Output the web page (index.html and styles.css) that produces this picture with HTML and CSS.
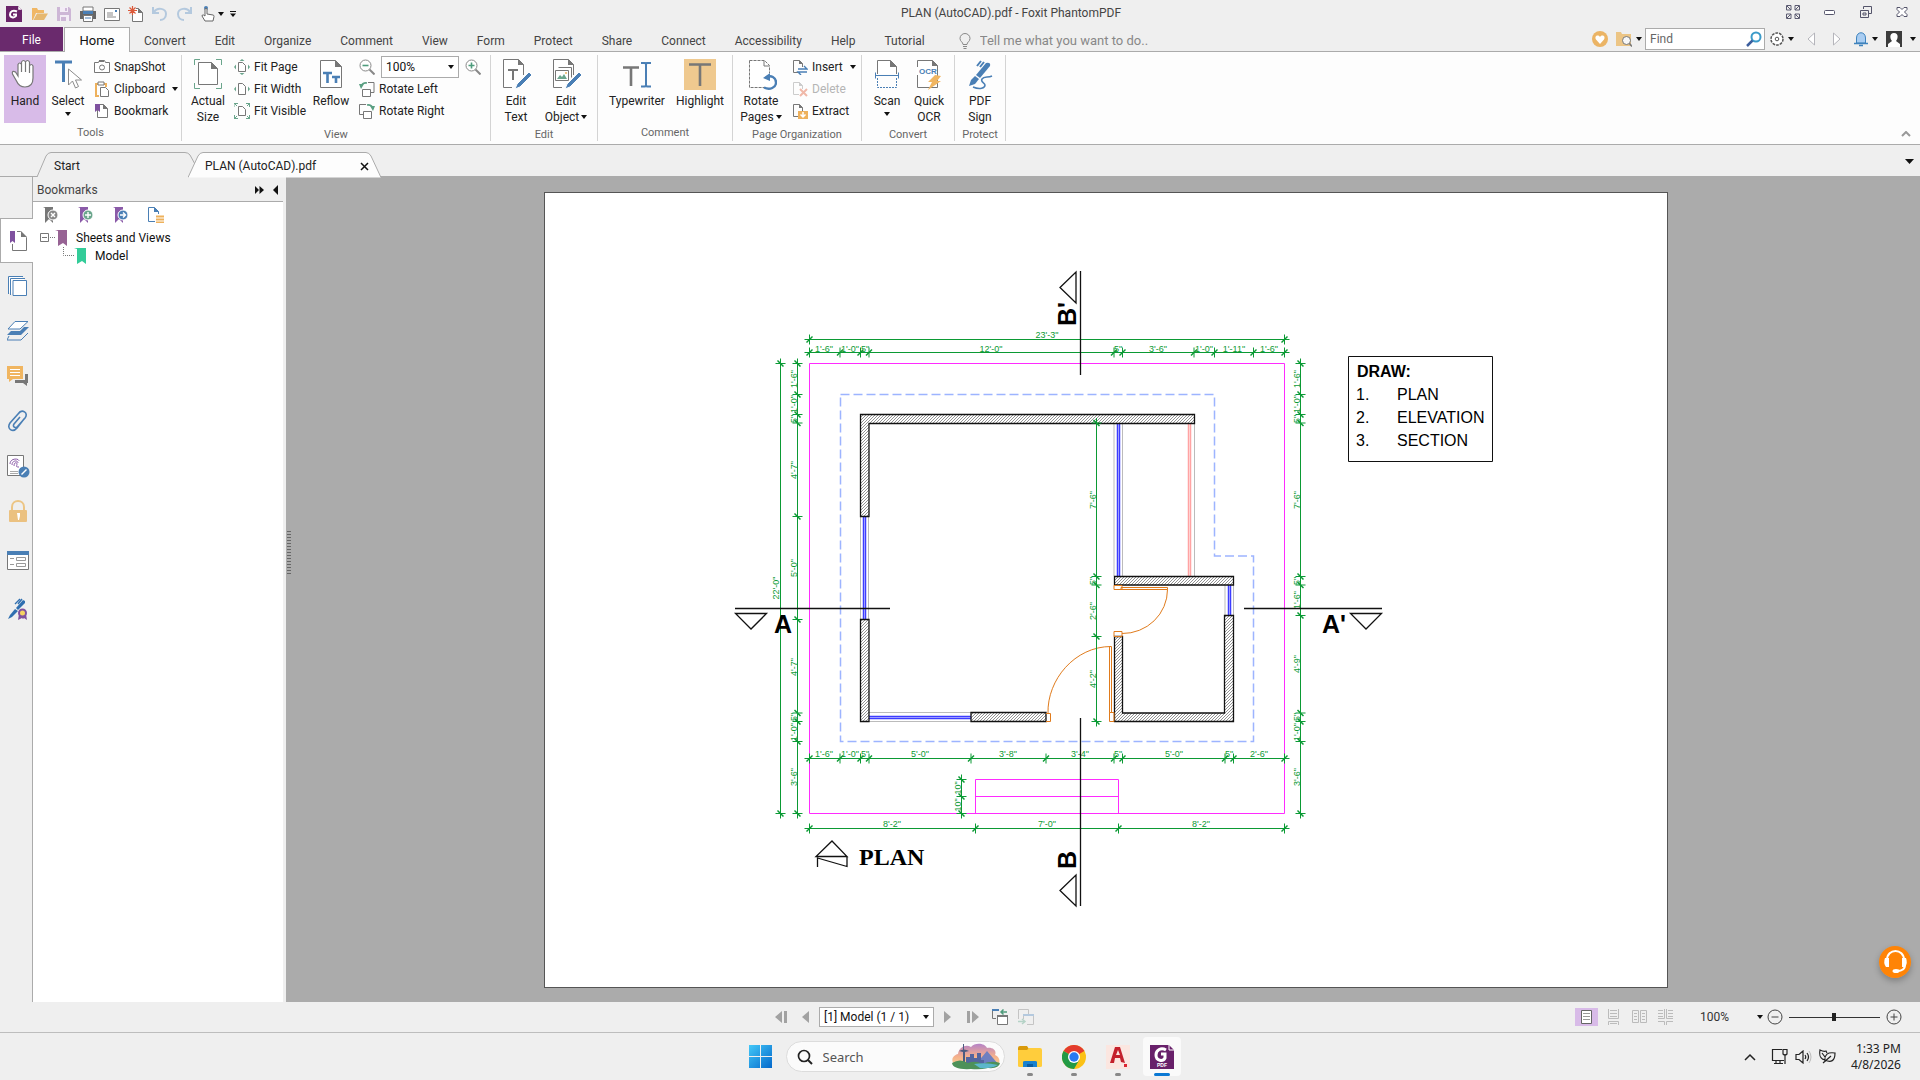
FILE: index.html
```html
<!DOCTYPE html>
<html lang="en">
<head>
<meta charset="utf-8">
<title>PLAN (AutoCAD).pdf - Foxit PhantomPDF</title>
<link rel="stylesheet" href="styles.css">
</head>
<body>
<svg class="defs" width="0" height="0" aria-hidden="true">
  <defs>
    <symbol id="caret" viewBox="0 0 6 4"><path d="M0 0h6L3 4z" fill="#111"/></symbol>
    <symbol id="page" viewBox="0 0 16 16"><path d="M3.500 1.500h6l4 4v9h-10z" fill="#fff" stroke="#777"/><path d="M9 1l5 5H9z" fill="#777"/></symbol>
  </defs>
</svg>

<header class="titlebar">
  <div class="quick">
    <svg class="logo" width="16" height="16" viewBox="0 0 16 16"><path d="M0 0h12l4 4v12H0z" fill="#6a2469"/><path d="M12 0v4h4" fill="#fff" stroke="#6a2469" stroke-width=".5"/><path d="M11 5.500c-4-2-7 0-7 3s4 4 6 1.500V8.500H7" fill="none" stroke="#fff" stroke-width="2"/></svg>
    <button title="Open"><svg width="16" height="16" viewBox="0 0 16 16"><path d="M0 2h5l1 2h6v3H4l-3 7H0z" fill="#f0b765"/><path d="M5 7.500h11l-4 6.500H1.500z" fill="#e6b870"/></svg></button>
    <button title="Save"><svg width="16" height="16" viewBox="0 0 16 16"><path d="M1 1h12l2 2v12H1z" fill="#cdb7d6"/><path d="M4 1h8v5H4zM4 9h9v6H4z" fill="#f3edf6"/><path d="M9 2h2v3H9zM5 11h5v4H5z" fill="#cdb7d6"/></svg></button>
    <button title="Print"><svg width="16" height="16" viewBox="0 0 16 16"><path d="M3 1h10v4H3z" fill="#fff" stroke="#777"/><path d="M0 5h16v8H0z" fill="#666"/><path d="M3 5h10v3H3z" fill="#4a7fb5"/><path d="M3.500 9.500h9v6h-9z" fill="#fff" stroke="#777"/><path d="M5 12h6" stroke="#4a7fb5"/></svg></button>
    <button title="Email"><svg width="16" height="16" viewBox="0 0 16 16"><path d="M.5 2.500h15v12H.5z" fill="#fff" stroke="#777"/><path d="M3 7h6M3 9h6M3 11h9" stroke="#888"/><path d="M11 4h2v2h-2z" fill="#4a7fb5"/></svg></button>
    <button title="New"><svg width="16" height="16" viewBox="0 0 16 16"><path d="M4.500 7v8.500h10v-9l-4-4H8" fill="#fff" stroke="#777"/><path d="M10 2l5 5h-5z" fill="#777"/><path d="M4.500 0v9M0 4.500h9M1.500 1.500l6 6M7.500 1.500l-6 6" stroke="#dc5a3a" stroke-width="1.200"/></svg></button>
    <button title="Undo"><svg width="16" height="16" viewBox="0 0 16 16"><path d="M1 1v6h6M2 6c3-5 12-4 12 2 0 4-3 6-6 6" fill="none" stroke="#b4c9de" stroke-width="2"/></svg></button>
    <button title="Redo"><svg width="16" height="16" viewBox="0 0 16 16"><path d="M15 1v6H9M14 6C11 1 2 2 2 8c0 4 3 6 6 6" fill="none" stroke="#b4c9de" stroke-width="2"/></svg></button>
    <button title="Touch mode"><svg width="16" height="16" viewBox="0 0 16 16"><circle cx="6" cy="2" r="2" fill="#4a7fb5"/><path d="M5 10V3q1-1.500 2 0v5l6 1q1 0 1 1.500L13 15H5L2 10q0-1.500 1.500-1z" fill="#fff" stroke="#666"/></svg></button>
    <svg class="handarrow" width="6" height="4"><use href="#caret"/></svg>
    <button title="Customize"><svg width="6" height="6" viewBox="0 0 6 6"><path d="M0 .5h6" stroke="#111"/><path d="M0 2.500h6L3 6z" fill="#111"/></svg></button>
  </div>
  <div class="title">PLAN (AutoCAD).pdf - Foxit PhantomPDF</div>
  <div class="winctl">
    <button title="Full screen"><svg width="14" height="14" viewBox="0 0 14 14"><path d="M.5 5V.5H5V5zM9 .5h4.500V5H9zM.5 9H5v4.500H.5zM9 9h4.500v4.500H9zM1 1l4 4M13 1L9 5M1 13l4-4M13 13L9 9" fill="none" stroke="#5a5a70"/></svg></button>
    <button title="Minimize"><svg width="12" height="14" viewBox="0 0 12 14"><rect x=".5" y="5.500" width="10" height="4" rx="1" fill="#fff" stroke="#55556b"/></svg></button>
    <button title="Restore"><svg width="12" height="12" viewBox="0 0 12 12"><path d="M3.500 3V.5h8v7H9M.5 4.500h8v7h-8zM3 7h3v2H3z" fill="none" stroke="#55556b"/></svg></button>
    <button title="Close"><svg width="12" height="12" viewBox="0 0 12 12"><path d="M1 1.500h3l2 2 2-2h3v2L8.500 6l2.500 2.500v2H8l-2-2-2 2H1v-2L3.500 6 1 3.500z" fill="#fff" stroke="#55556b"/></svg></button>
  </div>
</header>

<nav class="menubar">
  <button class="file">File</button>
  <button class="home">Home</button>
  <div class="menus">
    <button>Convert</button><button>Edit</button><button>Organize</button><button>Comment</button><button>View</button><button>Form</button><button>Protect</button><button>Share</button><button>Connect</button><button>Accessibility</button><button>Help</button><button>Tutorial</button>
  </div>
  <label class="tell"><svg width="12" height="16" viewBox="0 0 12 16"><path d="M4 11.500C4 9 1 8.500 1 5.500a5 5 0 0 1 10 0c0 3-3 3.500-3 6zM4 13.500h4M4.500 15.500h3" fill="none" stroke="#888"/></svg><input type="text" placeholder="Tell me what you want to do.." aria-label="Tell me what you want to do"></label>
  <div class="tools">
    <button title="Favorite"><svg width="16" height="16" viewBox="0 0 16 16"><circle cx="8" cy="8" r="8" fill="#ebb465"/><path d="M8 13L4 8.500C2 5 6 3 8 6c2-3 6-1 4 2.500z" fill="#fff"/></svg></button>
    <button class="drop" title="Search folder"><svg width="16" height="16" viewBox="0 0 16 16"><path d="M0 1h5l1 2h9v12H0z" fill="#ecc585"/><circle cx="10.500" cy="9.500" r="4" fill="#f7f7f7" stroke="#777"/><path d="M13.500 12.500L16 15.500" stroke="#777" stroke-width="1.500"/></svg><svg width="6" height="4"><use href="#caret"/></svg></button>
    <div class="find"><input type="text" placeholder="Find" aria-label="Find"><svg width="16" height="16" viewBox="0 0 16 16"><circle cx="10" cy="6" r="4.500" fill="#fff" stroke="#3b9bc9" stroke-width="2"/><path d="M6.500 9.500L1 15" stroke="#3d5f9e" stroke-width="2.500"/></svg></div>
    <button class="drop" title="Settings"><svg width="14" height="14" viewBox="0 0 14 14"><circle cx="7" cy="7" r="6" fill="#fff" stroke="#555" stroke-width="1.500" stroke-dasharray="2.700 1"/><circle cx="7" cy="7" r="1.800" fill="none" stroke="#555"/></svg><svg width="6" height="4"><use href="#caret"/></svg></button>
    <button class="step" title="Previous"><svg width="8" height="14" viewBox="0 0 8 14"><path d="M7.500 1v12L1 7z" fill="#fff" stroke="#b5b5bb"/></svg></button>
    <button class="step" title="Next"><svg width="8" height="14" viewBox="0 0 8 14"><path d="M.5 1v12L7 7z" fill="#fff" stroke="#b5b5bb"/></svg></button>
    <button class="drop" title="Notifications"><svg width="14" height="16" viewBox="0 0 14 16"><path d="M2.500 12V7c0-7 9-7 9 0v5z" fill="#a9cdf2" stroke="#3f83bd"/><path d="M0 12.500h14M5 14.500h4" stroke="#3f83bd" stroke-width="1.500"/></svg><svg width="6" height="4"><use href="#caret"/></svg></button>
    <button class="drop user" title="Account"><svg width="16" height="16" viewBox="0 0 16 16"><path d="M0 0h16v16H0z" fill="#3c3c3c"/><path d="M8 2c5 0 4 6 2 8l4 3v3H2v-3l4-3C4 8 3 2 8 2z" fill="#fff"/></svg><svg width="6" height="4"><use href="#caret"/></svg></button>
  </div>
</nav>

<section class="ribbon">
  <div class="group g-tools">
    <div class="cells">
      <button class="big on"><svg width="32" height="32" viewBox="0 0 32 32"><path d="M9 18V6.500q1.500-3 3.500 0V14 4q2-3 4 0v10V4q2-3 4 0v11V8q2-3 3.500 0v12q0 9-8 9-6 0-8.500-6l-4-7q-1-4 3-2z" fill="#fff" stroke="#777" stroke-width="1.200"/></svg>Hand</button>
      <button class="big"><svg width="32" height="32" viewBox="0 0 32 32"><path d="M3 4h17M11.500 4v20" stroke="#4a7fb5" stroke-width="3" fill="none"/><path d="M16.500 11v16l4-4 3 7 3-1.500-3-6.500h6z" fill="#fff" stroke="#8b8b8b"/></svg>Select<svg class="under" width="6" height="4"><use href="#caret"/></svg></button>
      <div class="col">
        <button class="small"><svg width="16" height="16" viewBox="0 0 16 16"><path d="M.5 3.500h4l1-2h5l1 2h4v10H.5z" fill="#fff" stroke="#777"/><circle cx="8" cy="8.500" r="2.500" fill="none" stroke="#777"/><path d="M5 1h5v2H5z" fill="#777"/></svg>SnapShot</button>
        <button class="small"><svg width="16" height="16" viewBox="0 0 16 16"><path d="M5 15H2V3h10v3" fill="none" stroke="#eeb15c" stroke-width="2"/><path d="M4 1h6v3H4z" fill="#fff" stroke="#777"/><path d="M6.500 6.500h5l3 3v6h-8z" fill="#fff" stroke="#777"/></svg>Clipboard<svg class="arr" width="6" height="4"><use href="#caret"/></svg></button>
        <button class="small"><svg width="16" height="16" viewBox="0 0 16 16"><use href="#page"/><path d="M1 1h5v8L3.500 7 1 9z" fill="#7f519f"/></svg>Bookmark</button>
      </div>
    </div>
    <div class="name">Tools</div>
  </div>

  <div class="group g-view">
    <div class="cells">
      <button class="big"><svg width="32" height="32" viewBox="0 0 32 32"><path d="M2.500 7V1.500H8M24 1.500h5.500V7M2.500 25v5.500H8M24 30.500h5.500V25" fill="none" stroke="#6aa58c"/><path d="M6.500 4.500h13l6 6v16h-19z" fill="#fff" stroke="#777"/><path d="M19 4l7 7h-7z" fill="#777"/></svg>Actual<br>Size</button>
      <div class="col">
        <button class="small"><svg width="16" height="16" viewBox="0 0 16 16"><path d="M4.500 3.500h4l3 3v6h-7z" fill="#fff" stroke="#777"/><path d="M8 0l2.500 2h-5zM8 16l2.500-2h-5zM0 8l2-2.500v5zM16 8l-2-2.500v5z" fill="#6aa58c"/></svg>Fit Page</button>
        <button class="small"><svg width="16" height="16" viewBox="0 0 16 16"><path d="M4.500 2.500h4l3 3v8h-7z" fill="#fff" stroke="#777"/><path d="M0 8l2-2.500v5zM16 8l-2-2.500v5z" fill="#6aa58c"/></svg>Fit Width</button>
        <button class="small"><svg width="16" height="16" viewBox="0 0 16 16"><path d="M4.500 3.500h4l3 3v6h-7z" fill="#fff" stroke="#777"/><path d="M0 4V.5h4M12 .5h3.500V4M.5 12v3.500H4M12 15.500h3.500V12M0 0l3 3M16 0l-3 3M0 16l3-3M16 16l-3-3" fill="none" stroke="#6aa58c"/></svg>Fit Visible</button>
      </div>
      <button class="big"><svg width="32" height="32" viewBox="0 0 32 32"><path d="M5.500 2.500h15l6 6v21h-21z" fill="#fff" stroke="#777"/><path d="M20 2l7 7h-7z" fill="#777"/><path d="M8 15h9M12.500 14v11M17 19h8M21 18v7" stroke="#4a7fb5" stroke-width="2.600"/></svg>Reflow</button>
      <div class="col zoomcol">
        <div class="zoomrow">
          <button title="Zoom out"><svg width="16" height="16" viewBox="0 0 16 16"><circle cx="6.500" cy="6.500" r="5.500" fill="#fff" stroke="#888"/><path d="M3.500 6.500h6" stroke="#4f9c7c" stroke-width="1.600"/><path d="M10.500 10.500l5 5" stroke="#888" stroke-width="2"/></svg></button>
          <div class="combo"><select aria-label="Zoom level"><option>100%</option></select><svg width="6" height="4"><use href="#caret"/></svg></div>
          <button title="Zoom in"><svg width="16" height="16" viewBox="0 0 16 16"><circle cx="6.500" cy="6.500" r="5.500" fill="#fff" stroke="#888"/><path d="M3.500 6.500h6M6.500 3.500v6" stroke="#4f9c7c" stroke-width="1.600"/><path d="M10.500 10.500l5 5" stroke="#888" stroke-width="2"/></svg></button>
        </div>
        <button class="small"><svg width="16" height="16" viewBox="0 0 16 16"><path d="M9 1.500h6v10h-3" fill="none" stroke="#777"/><path d="M3.500 8.500h8v7h-8z" fill="#fff" stroke="#777"/><path d="M2 6c0-3 3-4.500 6-4" fill="none" stroke="#5a9f82" stroke-width="1.600"/><path d="M0 3h5L2 8z" fill="#5a9f82"/></svg>Rotate Left</button>
        <button class="small"><svg width="16" height="16" viewBox="0 0 16 16"><path d="M7 1.500H.5v10H4" fill="none" stroke="#777"/><path d="M4.500 8.500h8v7h-8z" fill="#fff" stroke="#777"/><path d="M14 6c0-3-3-4.500-6-4" fill="none" stroke="#5a9f82" stroke-width="1.600"/><path d="M16 3h-5l3 5z" fill="#5a9f82"/></svg>Rotate Right</button>
      </div>
    </div>
    <div class="name">View</div>
  </div>

  <div class="group g-edit">
    <div class="cells">
      <button class="big"><svg width="32" height="32" viewBox="0 0 32 32"><path d="M12 29.500H3.500v-28h15l5 5V17" fill="#fff" stroke="#777"/><path d="M18 1l6 6h-6z" fill="#777"/><path d="M8 12h10M13 11v11" stroke="#777" stroke-width="2"/><path d="M15 31l2-5L29 14l3 3-12 12z" fill="#4a7fb5" stroke="#fff"/></svg>Edit<br>Text</button>
      <button class="big"><svg width="32" height="32" viewBox="0 0 32 32"><path d="M12 29.500H3.500v-28h15l5 5V17" fill="#fff" stroke="#777"/><path d="M18 1l6 6h-6z" fill="#777"/><path d="M8.500 9.500h13v10M5.500 12.500h13v10h-13z" fill="#fff" stroke="#777"/><path d="M7 21l3-4 2 2 2-3 3 5z" fill="#6aa58c"/><circle cx="16" cy="15" r="1" fill="#eeb15c"/><path d="M15 31l2-5L29 14l3 3-12 12z" fill="#4a7fb5" stroke="#fff"/></svg>Edit<br><span>Object<svg width="6" height="4"><use href="#caret"/></svg></span></button>
    </div>
    <div class="name">Edit</div>
  </div>

  <div class="group g-comment">
    <div class="cells">
      <button class="big"><svg width="32" height="32" viewBox="0 0 32 32"><path d="M2 9.500h16M10 9v19" stroke="#777" stroke-width="2.600"/><path d="M20 5h4l1 1 1-1h4M25 5v23M20 28.500h4l1-1 1 1h4" fill="none" stroke="#4a7fb5" stroke-width="2"/></svg>Typewriter</button>
      <button class="big"><svg width="32" height="32" viewBox="0 0 32 32"><path d="M0 1h32v31H0z" fill="#efc98f"/><path d="M5 6.500h22M16 6v22" stroke="#777" stroke-width="2.600"/></svg>Highlight</button>
    </div>
    <div class="name">Comment</div>
  </div>

  <div class="group g-pages">
    <div class="cells">
      <button class="big"><svg width="32" height="32" viewBox="0 0 32 32"><path d="M4.500 2.500h15l5 5v22h-20z" fill="#fff" stroke="#777" stroke-dasharray="3 1"/><path d="M19 3v5h5" fill="none" stroke="#777"/><circle cx="25" cy="23" r="8" fill="#fff"/><path d="M19 29.500c6 3 12 0 12-5s-5-8-10-5" fill="none" stroke="#4a7fb5" stroke-width="2.400"/><path d="M18 20l7-5v8z" fill="#4a7fb5"/></svg>Rotate<br><span>Pages<svg width="6" height="4"><use href="#caret"/></svg></span></button>
      <div class="col">
        <button class="small"><svg width="16" height="16" viewBox="0 0 16 16"><path d="M7 13.500H1.500v-12h6l3 3V8" fill="none" stroke="#777"/><path d="M7 1l4 4H7z" fill="#777"/><path d="M6 10h9l-3-3M15 13H6l3 3" fill="none" stroke="#4a7fb5" stroke-width="1.400"/></svg>Insert<svg class="arr" width="6" height="4"><use href="#caret"/></svg></button>
        <button class="small" disabled><svg width="16" height="16" viewBox="0 0 16 16"><path d="M7 13.500H1.500v-12h6l3 3V8" fill="none" stroke="#ccc"/><path d="M7 1l4 4H7z" fill="#ccc"/><path d="M8 8l7 7M15 8l-7 7" stroke="#f0b8a8" stroke-width="2"/></svg>Delete</button>
        <button class="small"><svg width="16" height="16" viewBox="0 0 16 16"><path d="M6 13.500H1.500v-12h6l3 3V8" fill="none" stroke="#777"/><path d="M7 1l4 4H7z" fill="#777"/><path d="M6 8h10v8H6z" fill="#eeb15c"/><path d="M11 9v5M8.500 11.500L11 14l2.500-2.500" fill="none" stroke="#fff" stroke-width="1.500"/></svg>Extract</button>
      </div>
    </div>
    <div class="name">Page Organization</div>
  </div>

  <div class="group g-convert">
    <div class="cells">
      <button class="big"><svg width="32" height="32" viewBox="0 0 32 32"><path d="M6.500 16V2.500h13l6 6V16" fill="#fff" stroke="#777"/><path d="M19 2l7 7h-7z" fill="#777"/><path d="M4 17.500h24M4.500 14.500v6M27.500 14.500v6" stroke="#4a7fb5"/><path d="M6.500 20v9.500h19V20" fill="none" stroke="#4a7fb5" stroke-dasharray="2 1"/></svg>Scan<svg class="under" width="6" height="4"><use href="#caret"/></svg></button>
      <button class="big"><svg width="32" height="32" viewBox="0 0 32 32"><path d="M4.500 2.500h15l5 5v22h-20z" fill="#fff" stroke="#777"/><path d="M19 2l6 6h-6z" fill="#777"/><path d="M3 9h21v8H3z" fill="#fff"/><text class="ocr" x="6" y="16">OCR</text><path d="M22 17l6 1-4 5h4L15 32l4-8h-4z" fill="#f0b560"/></svg>Quick<br>OCR</button>
    </div>
    <div class="name">Convert</div>
  </div>

  <div class="group g-protect">
    <div class="cells">
      <button class="big"><svg width="32" height="32" viewBox="0 0 32 32"><path d="M13 8l4-5M16 9l4-5" stroke="#4a7fb5" stroke-width="2"/><path d="M12 17L22 5q5-1 4 3L16 20z" fill="#4a7fb5"/><path d="M11 18l4 3-4 5-6 2 2-6z" fill="#4a7fb5"/><path d="M9 29c7 3 12 1 12-2 0-2-5-3-3-6s6-1 10-3" fill="none" stroke="#4a7fb5" stroke-width="1.500"/></svg>PDF<br>Sign</button>
    </div>
    <div class="name">Protect</div>
  </div>
  <button class="collapse" title="Collapse ribbon"><svg width="10" height="6" viewBox="0 0 10 6"><path d="M1 5l4-4 4 4" fill="none" stroke="#999" stroke-width="2"/></svg></button>
</section>

<div class="doctabs" role="tablist">
  <button class="dtab" role="tab"><svg width="165" height="25" viewBox="0 0 165 25"><path d="M0 25L9 4Q11 .5 14 .5H148Q151 .5 153 3L165 25" fill="#efefef" stroke="#ababab"/></svg><span>Start</span></button>
  <button class="dtab current" role="tab" aria-selected="true"><svg width="194" height="26" viewBox="0 0 194 26"><path d="M0 25.500L10 4Q12 .5 15 .5H178Q181 .5 183 4L193 25.500" fill="#fdfdfd" stroke="#ababab"/></svg><span>PLAN (AutoCAD).pdf</span><svg class="x" width="9" height="9" viewBox="0 0 9 9"><path d="M1 1l7 7M8 1L1 8" stroke="#111" stroke-width="1.500"/></svg></button>
  <svg class="tablist" width="9" height="5" viewBox="0 0 9 5"><path d="M0 0h9L4.500 5z" fill="#111"/></svg>
</div>

<div class="work">
  <nav class="rail">
    <button class="active" title="Bookmarks"><svg width="22" height="22" viewBox="0 0 22 22"><path d="M5.500 1.500h8l6 6v13h-14z" fill="#fff" stroke="#777"/><path d="M14 1l6 6h-6z" fill="#777"/><path d="M2 0h8v14H2z" fill="#fff"/><path d="M3 1h5v12l-2.500-2L3 13z" fill="#7f519f"/></svg></button>
    <button title="Pages"><svg width="22" height="22" viewBox="0 0 22 22"><path d="M1.500 19V1.500H16M3.500 20V3.500H18M6 5.500h13.500v15H6z" fill="#fff" stroke="#4a7fb5"/></svg></button>
    <button title="Layers"><svg width="22" height="22" viewBox="0 0 22 22"><path d="M8 1.500h13L13 9H1z" fill="#fff" stroke="#4a7fb5"/><path d="M17 7h5l-8 8H0l4-4h9z" fill="#4a7fb5"/><path d="M2 16l-2 4h14l7-7" fill="none" stroke="#4a7fb5"/></svg></button>
    <button title="Comments"><svg width="22" height="22" viewBox="0 0 22 22"><path d="M8 15h10V9h3v9h-1v3l-4-3H8z" fill="#777"/><path d="M0 1h16v13H6l-4 3v-3H0z" fill="#f0b560"/><path d="M3 4.500h10M3 7.500h10M3 10.500h10" stroke="#fff"/></svg></button>
    <button title="Attachments"><svg width="22" height="22" viewBox="0 0 22 22"><path d="M17 9l-7 9c-4 5-11 1-7-5L11 4c4-6 11-1 7 4l-7 8c-2 3-6 1-4-2l6-7" fill="none" stroke="#4a7fb5" stroke-width="1.600"/></svg></button>
    <button title="Signatures"><svg width="24" height="24" viewBox="0 0 24 24"><path d="M1.500 1.500h16v20h-16z" fill="#fff" stroke="#777"/><path d="M4 10c0-6 9-6 9-3M6 11c0-5 6-5 6-2M8 12c0-4 3-4 3-2s-2 3 2 3" fill="none" stroke="#8a5aa8"/><path d="M4 17.500h8M4 19.500h8" stroke="#aaa"/><circle cx="18" cy="18" r="5.500" fill="#4a7fb5"/><path d="M15.500 20.500l5-5" stroke="#fff" stroke-width="1.500"/></svg></button>
    <button title="Security"><svg width="22" height="22" viewBox="0 0 22 22"><path d="M5 11V7c0-8 12-8 12 0v4" fill="none" stroke="#ecc585" stroke-width="2"/><rect x="2" y="10" width="18" height="12" rx="1" fill="#ebc180"/><path d="M10 13h3v3l-1 4h-1z" fill="#fff"/></svg></button>
    <button class="form" title="Fields"><svg width="22" height="20" viewBox="0 0 22 20"><path d="M.5.500h21v18H.5z" fill="#fff" stroke="#777"/><path d="M0 0h22v4H0z" fill="#4a7fb5"/><path d="M3 7.500h4M3 13.500h4M9.500 6.500h9v3h-9zM9.500 12.500h9v3h-9z" fill="none" stroke="#999"/></svg></button>
    <button class="sign" title="Digital sign"><svg width="22" height="22" viewBox="0 0 22 22"><path d="M8 6l5-5M11 6l4-5" stroke="#2f6fb0" stroke-width="1.400"/><path d="M9 10l7-8 2 1v2l-7 7z" fill="#2f6fb0"/><path d="M8 11l3 2-6 6-4 2 2-4z" fill="#2f6fb0"/><path d="M12 16h7l1 6-3-2-1 1-1-1-4 2z" fill="#7f519f"/><circle cx="15.500" cy="15" r="3.500" fill="#f5d262" stroke="#7f519f" stroke-width="2"/></svg></button>
  </nav>
  <aside class="panel">
    <div class="panelhead"><span>Bookmarks</span><svg width="9" height="8" viewBox="0 0 9 8"><path d="M0 0l4 4-4 4zM4.500 0l4.500 4-4.500 4z" fill="#111"/></svg><svg width="5" height="10" viewBox="0 0 5 10"><path d="M5 0v10L0 5z" fill="#111"/></svg></div>
    <div class="panelbody">
      <div class="bmtools">
        <button title="Delete bookmark"><svg width="16" height="16" viewBox="0 0 16 16"><path d="M0 0h10v16l-4-4-4 4V1z" fill="#777"/><circle cx="10" cy="8" r="5" fill="#888" stroke="#fff"/><path d="M8 6l4 4M12 6l-4 4" stroke="#fff" stroke-width="1.400"/></svg></button>
        <button title="Add bookmark"><svg width="16" height="16" viewBox="0 0 16 16"><path d="M0 0h10v16l-4-4-4 4V1z" fill="#8a5aa8"/><circle cx="10" cy="8" r="5" fill="#6aa58c" stroke="#fff"/><path d="M10 5v6M7 8h6" stroke="#fff" stroke-width="1.400"/></svg></button>
        <button title="Go to bookmark"><svg width="16" height="16" viewBox="0 0 16 16"><path d="M0 0h10v16l-4-4-4 4V1z" fill="#8a5aa8"/><circle cx="10" cy="8" r="5" fill="#4a7fb5" stroke="#fff"/><path d="M7 8h5M10 5.500L12.500 8 10 10.500" fill="none" stroke="#fff" stroke-width="1.400"/></svg></button>
        <button title="Options"><svg width="16" height="16" viewBox="0 0 16 16"><path d="M7 14.500H.5V.5h6l4 4V7" fill="#fff" stroke="#4a7fb5"/><path d="M6 0l5 5H6z" fill="#4a7fb5"/><path d="M8 9.500h8M8 12.500h8M8 15.500h8" stroke="#eeb15c" stroke-width="2"/></svg></button>
      </div>
      <ul class="tree">
        <li><svg width="32" height="18" viewBox="0 0 32 18"><path d="M.5 4.500h8v8h-8zM2 8.500h5" fill="#fff" stroke="#777"/><path d="M10 8.500h6" stroke="#777" stroke-dasharray="1 1"/><path d="M15 1h12v16l-4-3-5 3V2z" fill="#976394"/></svg>Sheets and Views
          <ul><li><svg width="24" height="18" viewBox="0 0 24 18"><path d="M.5 0v8.500H11" fill="none" stroke="#777" stroke-dasharray="1 1"/><path d="M11 1h12v16l-4-3-5 3V2z" fill="#33cc99"/></svg>Model</li></ul>
        </li>
      </ul>
    </div>
  </aside>
  <div class="splitter"></div>
  <main class="viewer">
    <svg class="paper" width="1124" height="796" viewBox="545 193 1122 794" role="img" aria-label="Floor plan">
      <defs>
        <pattern id="hatch" width="3" height="3" patternUnits="userSpaceOnUse"><path d="M-1 1l2-2M0 3l3-3M2 4l2-2" stroke="#777" stroke-width=".8"/></pattern>
        <marker id="tick" markerUnits="userSpaceOnUse" markerWidth="12" markerHeight="12" viewBox="-6 -6 12 12" orient="auto"><path d="M0-5V5M-5 0H5" stroke="#0b9a34"/><path d="M-3 3L3-3" stroke="#0b9a34" stroke-width="1.500"/></marker>
      </defs>
      <g class="plot">
        <path d="M809.500 363.500h475v450h-475zM975.500 813.500v-34h143v34M975.500 796.500h143"/>
      </g>
      <path class="eave" d="M840.500 394.500h374v161.500h39v185.500h-413z"/>
      <g class="frame">
        <path d="M860.500 517v102M868.500 517v102M869 712.500h102M869 721.500h102M1114 423v153M1122.500 423v153M1194.500 423v153M1225 585v31M1233.500 585v31"/>
      </g>
      <g class="glass"><path d="M863.500 517v102M865.500 517v102M869 716.500h102M869 718.500h102M1117.500 423v153M1119.500 423v153M1228.500 585v31M1230.500 585v31"/></g>
      <path class="rail-line" d="M1188.500 423v153M1190.500 423v153"/>
      <g class="walls">
        <path d="M860.500 414.500h334v9h-325.500v93h-8.500zM860.500 619.500h8.500v102h-8.500zM971 712.500h75v9h-75zM1114.500 576.500h119v8.500h-119zM1224.500 615.500h9v106h-119v-85h8v76.500h102z"/>
      </g>
      <g class="doors">
        <path d="M1114 585.500h8v4h-8zM1121 587.500h46.500v2h-46.500zM1114 631.500h8v5h-8zM1167.500 589.500a45 44 0 0 1-45.500 44M1109.500 712.500h4.500v9h-4.500zM1109.500 646.500h2v66h-2zM1046 713.500h4.500v8h-4.500M1111 646.500c-36 0-64 33-63 67"/>
      </g>
      <g class="dims">
        <path d="M809.500 339.500H1284.500"/>
        <path d="M809.500 352.500H840H860.500H869H1114H1122.500H1194H1214.500H1253.500H1284.500"/>
        <path d="M780.500 363.500V813.500"/>
        <path d="M797.500 363.500V394.500V414.500V423V516.500V619.500V713V721.500V741.500V813.500"/>
        <path d="M1096.500 423V576.500V585V636.500V721.500"/>
        <path d="M1300.500 363.500V394.500V414.500V423V576.500V585V615.500V713V721.500V741.500V813.500"/>
        <path d="M809.500 758.500H840H860.500H869H971H1046H1114H1122.500H1225H1233.500H1284.500"/>
        <path d="M809.500 828.500H975.500H1118.500H1284.500"/>
        <path d="M961.500 779.500V796.500V813.500"/>
      </g>
      <g class="dimtext">
        <text x="1047" y="338">23'-3"</text>
        <text x="824" y="352">1'-6"</text><text x="850" y="352">1'-0"</text><text x="865" y="352">5"</text><text x="991" y="352">12'-0"</text><text x="1118" y="352">5"</text><text x="1158" y="352">3'-6"</text><text x="1204" y="352">1'-0"</text><text x="1234" y="352">1'-11"</text><text x="1269" y="352">1'-6"</text>
        <text x="824" y="757">1'-6"</text><text x="850" y="757">1'-0"</text><text x="865" y="757">5"</text><text x="920" y="757">5'-0"</text><text x="1008" y="757">3'-8"</text><text x="1080" y="757">3'-4"</text><text x="1118" y="757">5"</text><text x="1174" y="757">5'-0"</text><text x="1229" y="757">5"</text><text x="1259" y="757">2'-6"</text>
        <text x="892" y="827">8'-2"</text><text x="1047" y="827">7'-0"</text><text x="1201" y="827">8'-2"</text>
        <g transform="rotate(-90)">
          <text x="-588" y="779">22'-0"</text>
          <text x="-379" y="797">1'-6"</text><text x="-404" y="797">1'-0"</text><text x="-419" y="797">5"</text><text x="-470" y="797">4'-7"</text><text x="-568" y="797">5'-0"</text><text x="-667" y="797">4'-7"</text><text x="-717" y="797">5"</text><text x="-732" y="797">1'-0"</text><text x="-777" y="797">3'-6"</text>
          <text x="-788" y="961">10"</text><text x="-805" y="961">10"</text>
          <text x="-500" y="1096">7'-6"</text><text x="-581" y="1096">5"</text><text x="-611" y="1096">2'-6"</text><text x="-679" y="1096">4'-2"</text>
          <text x="-379" y="1300">1'-6"</text><text x="-404" y="1300">1'-0"</text><text x="-419" y="1300">5"</text><text x="-500" y="1300">7'-6"</text><text x="-581" y="1300">5"</text><text x="-600" y="1300">1'-6"</text><text x="-664" y="1300">4'-9"</text><text x="-717" y="1300">5"</text><text x="-732" y="1300">1'-0"</text><text x="-777" y="1300">3'-6"</text>
        </g>
      </g>
      <g class="cuts">
        <path d="M735 608.500h155M1244 608.500h138M1080.500 271v104M1080.500 718v188"/>
        <path d="M735.500 613.500h31l-15.500 15.500zM1350.500 613.500h31l-15.500 15.500zM1076 272v31l-16-15.500zM1076 875v31l-16-15.500zM832 841l15 15.500h-31zM817.500 867v-9l29.500 8.500v-10"/>
        <text x="774" y="633">A</text><text x="1322" y="633">A'</text>
        <g transform="rotate(-90)"><text x="-326" y="1076">B'</text><text x="-869" y="1076">B</text></g>
      </g>
      <text class="plantitle" x="859" y="865">PLAN</text>
      <path d="M1348.500 356.500h144v105h-144z" fill="none" stroke="#111"/>
      <g class="notes">
        <text class="strong" x="1357" y="377">DRAW:</text>
        <text x="1356" y="400">1.</text><text x="1397" y="400">PLAN</text>
        <text x="1356" y="423">2.</text><text x="1397" y="423">ELEVATION</text>
        <text x="1356" y="446">3.</text><text x="1397" y="446">SECTION</text>
      </g>
    </svg>
    <button class="support" title="Support"><svg width="32" height="32" viewBox="0 0 32 32"><circle cx="16" cy="16" r="16" fill="#ff8406"/><path d="M8 14c0-12 17-12 17 0M26 19c0 4-3 6-8 6" fill="none" stroke="#fff" stroke-width="2"/><path d="M6 12h4v9H7q-3-4-1-9zM23 12h4q2 5-1 9h-3z" fill="#fff"/><ellipse cx="17" cy="25" rx="3.500" ry="2" fill="#fff"/></svg></button>
  </main>
</div>

<footer class="status">
  <div class="pager">
    <button title="First page"><svg width="13" height="14" viewBox="0 0 13 14"><path d="M8 1v12L1 7zM10 1h3v12h-3z" fill="#a2a2a2"/></svg></button>
    <button class="prev" title="Previous page"><svg width="8" height="14" viewBox="0 0 8 14"><path d="M8 1v12L1 7z" fill="#a2a2a2"/></svg></button>
    <div class="combo"><select aria-label="Page"><option>[1] Model (1 / 1)</option></select><svg width="6" height="4"><use href="#caret"/></svg></div>
    <button class="next" title="Next page"><svg width="8" height="14" viewBox="0 0 8 14"><path d="M0 1v12l7-6z" fill="#a2a2a2"/></svg></button>
    <button class="last" title="Last page"><svg width="13" height="14" viewBox="0 0 13 14"><path d="M5 1v12l7-6zM0 1h3v12H0z" fill="#a2a2a2"/></svg></button>
    <button title="Previous view"><svg width="16" height="16" viewBox="0 0 16 16"><path d="M4 9.500H.5v-9H7" fill="none" stroke="#777"/><path d="M0 0h7v2H0z" fill="#4a7fb5"/><path d="M5.500 6.500h10v9h-10z" fill="#fff" stroke="#777"/><path d="M5 6h11v2H5z" fill="#777"/><path d="M9 3h6M11.500.500L9 3l2.500 2.500" fill="none" stroke="#4f9c7c" stroke-width="1.500"/></svg></button>
    <button title="Next view"><svg width="16" height="16" viewBox="0 0 16 16"><path d="M.5 10V.5h10V5M5.500 10V6.500h10v9H9" fill="none" stroke="#c4c4c4"/><path d="M5 5h11v2H5z" fill="#b4c9de"/><path d="M0 12.500h7M4 10l3 2.500L4 15" fill="none" stroke="#b5d3c7" stroke-width="1.500"/></svg></button>
  </div>
  <div class="views">
    <button class="mode on" title="Single page"><svg width="11" height="14" viewBox="0 0 11 14"><path d="M.5.500h10v13H.5z" fill="#fff" stroke="#666"/><path d="M2 3.500h7M2 6.500h7M2 9.500h7" stroke="#999"/></svg></button>
    <button class="mode" title="Continuous"><svg width="11" height="16" viewBox="0 0 11 16"><path d="M.5 0v9.500h10V0M.5 16v-3.500h10V16M2 1.500h7M2 4.500h7M2 7.500h7M2 14.500h7" fill="none" stroke="#bbb"/></svg></button>
    <button class="mode" title="Facing"><svg width="15" height="14" viewBox="0 0 15 14"><path d="M.5.500h6v12h-6zM8.500.500h6v12h-6zM2 3.500h3M2 6.500h3M2 9.500h3M10 3.500h3M10 6.500h3M10 9.500h3" fill="none" stroke="#bbb"/></svg></button>
    <button class="mode" title="Continuous facing"><svg width="15" height="16" viewBox="0 0 15 16"><path d="M0 9.500h6.500V0M15 9.500H8.500V0M0 12.500h6.500V16M15 12.500H8.500V16M0 1.500h5M0 4.500h5M0 7.500h5M10 1.500h5M10 4.500h5M10 7.500h5" fill="none" stroke="#bbb"/></svg></button>
    <button class="pct">100%<svg width="6" height="4"><use href="#caret"/></svg></button>
    <button title="Zoom out"><svg width="16" height="16" viewBox="0 0 16 16"><circle cx="8" cy="8" r="7" fill="none" stroke="#444"/><path d="M4.500 8h7" stroke="#444"/></svg></button>
    <input class="slider" type="range" min="0" max="100" value="49" aria-label="Zoom">
    <button title="Zoom in"><svg width="16" height="16" viewBox="0 0 16 16"><circle cx="8" cy="8" r="7" fill="none" stroke="#444"/><path d="M4.500 8h7M8 4.500v7" stroke="#444"/></svg></button>
  </div>
</footer>

<div class="taskbar">
  <div class="apps">
    <button title="Start"><svg width="24" height="24" viewBox="0 0 24 24"><defs><linearGradient id="win" x1="0" y1="0" x2="1" y2="1"><stop offset="0" stop-color="#43c8f8"/><stop offset="1" stop-color="#0468cb"/></linearGradient></defs><path d="M0 0h11v11H0zM12 0h11v11H12zM0 12h11v11H0zM12 12h11v11H12z" fill="url(#win)"/></svg></button>
    <div class="search"><svg width="16" height="16" viewBox="0 0 16 16"><circle cx="7" cy="7" r="5.500" fill="none" stroke="#222" stroke-width="1.700"/><path d="M11 11l4 4" stroke="#222" stroke-width="2"/></svg><input type="text" placeholder="Search" aria-label="Search">
      <svg width="48" height="27" viewBox="0 0 48 27"><defs><linearGradient id="sky" x1="0" y1="0" x2="0" y2="1"><stop offset="0" stop-color="#b583c8"/><stop offset=".6" stop-color="#f5b08c"/><stop offset="1" stop-color="#f7cf90"/></linearGradient></defs><path d="M2 21C-2 16 2 12 6 11 7 4 14 1 19 4c4-5 14-4 16 1 6-1 10 3 8 7 5 2 6 8 2 10z" fill="url(#sky)"/><path d="M24 21l11-13 12 14z" fill="#6d7fc0"/><path d="M14 21v-7h4v-3h4v4h3v-5h4v7h3v4z" fill="#54659f"/><path d="M7 8q5-3 10 0l-4 1v13h-2V9zM11 1h1v6h-1z" fill="#4c5b80"/><path d="M0 20q8-5 16 0 8-3 14 1 10-4 18-1-1 6-12 5-8 2-17 1Q1 27 0 20z" fill="#4d9159"/><path d="M22 21q12-2 24 1-8 4-18 3z" fill="#5bb7cb"/></svg></div>
    <button class="app running" title="File Explorer"><svg width="24" height="24" viewBox="0 0 24 24"><path d="M0 3q0-2 2-2h7l2 3v5H0z" fill="#d99a0b"/><path d="M0 5h9l2-2h11q2 0 2 2v16q0 1-2 1H2q-2 0-2-1z" fill="#ffcd3c"/><path d="M5 22v-5q0-1 2-1h10q2 0 2 1v5z" fill="#1781cf"/><path d="M9 19h6v3H9z" fill="#095ca1"/></svg></button>
    <button class="app running" title="Chrome"><svg width="24" height="24" viewBox="0 0 24 24"><circle cx="12" cy="12" r="12" fill="#fbc116"/><path d="M12 12L1.600 6A12 12 0 0 1 22.400 6z" fill="#e33b2e"/><path d="M12 12L1.600 6A12 12 0 0 0 12 24l5.200-9z" fill="#229a45"/><circle cx="12" cy="12" r="6" fill="#fff"/><circle cx="12" cy="12" r="4.700" fill="#2979f2"/></svg></button>
    <button class="app running" title="AutoCAD"><svg width="24" height="24" viewBox="0 0 24 24"><path d="M0 0h24v24H0z" fill="#fbe6e0"/><path d="M4 18L9 2h5l5 16-4-1-1-4H9l-1 5zm6-8h4l-2-5z" fill="#c4202b"/><path d="M18 19h3v3h-3z" fill="#dd2430"/></svg></button>
    <button class="app front" title="Foxit PhantomPDF"><svg width="24" height="24" viewBox="0 0 24 24"><path d="M0 0h19l5 5v19H0z" fill="#68206a"/><path d="M19 0v5h5" fill="none" stroke="#fff"/><path d="M16 5C11 2 6 5 6 10c0 6 7 7 9 3V9h-4" fill="none" stroke="#fff" stroke-width="3"/><text class="pdf" x="7" y="22">PDF</text></svg></button>
  </div>
  <div class="tray">
    <svg width="12" height="8" viewBox="0 0 12 8"><path d="M1 7l5-5 5 5" fill="none" stroke="#222" stroke-width="1.500"/></svg>
    <div class="trayicons">
      <svg width="17" height="17" viewBox="0 0 17 17"><path d="M11 1.500H1.500v11H13M5 13v3M9 13v3M3 15.500h9" fill="none" stroke="#222" stroke-width="1.200"/><path d="M12 1.500h4V6q-2 2-4 0zM14 7v9" fill="none" stroke="#222" stroke-width="1.200"/></svg>
      <svg width="17" height="14" viewBox="0 0 17 14"><path d="M1 4.500h3l4-3.500v12L4 9.500H1zM10 5q1.500 2 0 4M12 3q3 4 0 8" fill="none" stroke="#222" stroke-width="1.200"/><path d="M14 1q4 6 0 12" fill="none" stroke="#bbb"/></svg>
      <svg width="17" height="15" viewBox="0 0 17 15"><path d="M6 11C1 10 0 7 1 1q4 2 6 1l1 2M6 13c-1-8 3-10 10-9 0 8-4 10-10 7M3 4l3 4M4 14l8-7" fill="none" stroke="#222" stroke-width="1.200"/></svg>
    </div>
    <div class="clock"><div>1:33 PM</div><div>4/8/2026</div></div>
  </div>
</div>
</body>
</html>
```
FILE: styles.css
```css
* { box-sizing: border-box; }
body {
  margin: 0;
  height: 100vh;
  display: flex;
  flex-direction: column;
  overflow: hidden;
  background: #efefef;
  color: #222;
  font: 12px/16px Roboto, "Noto Sans", sans-serif;
}
button, input, select { font: inherit; color: inherit; border: 0; padding: 0; margin: 0; background: none; }
button { display: flex; align-items: center; justify-content: center; cursor: default; }
svg { display: block; flex: none; }
.defs { position: absolute; }

/* title bar */
.titlebar { display: flex; height: 27px; align-items: center; flex: none; }
.quick { display: flex; gap: 8px; padding-left: 6px; align-items: center; }
.logo { margin-right: 2px; }
.handarrow { margin: 0 -2px 0 -6px; }
.title { flex: 1; text-align: center; color: #444; padding-bottom: 1px; }
.winctl { display: flex; padding: 0 12px 4px 0; gap: 24px; align-items: center; }

/* menu bar */
.menubar { display: flex; height: 25px; border-bottom: 1px solid #ababab; flex: none; align-items: stretch; }
.file { width: 63px; background: #6a2a6d; color: #fff; padding-top: 2px; }
.home { width: 66px; margin: 0 0 -1px 1px; padding-top: 2px; background: #fdfdfd; border: 1px solid #ababab; border-bottom: 0; font-size: 13px; color: #111; }
.menus { display: flex; gap: 29px; padding: 3px 0 0 14px; color: #444; }
.tell { display: flex; align-items: center; gap: 9px; margin-left: 34px; padding-top: 3px; }
.tell input { width: 200px; outline: 0; font-size: 13px; }
.tell input::placeholder { color: #888; opacity: 1; }
.tools { margin-left: auto; display: flex; align-items: center; padding-right: 4px; gap: 8px; }
.drop { gap: 4px; }
.user { gap: 8px; }
.step { width: 18px; }
.find { display: flex; align-items: center; width: 120px; height: 22px; background: #fff; border: 1px solid #ababab; padding: 0 2px 0 4px; margin-left: -5px; margin-right: -3px; }
.find input { flex: 1; min-width: 0; }
.find input::placeholder { color: #666; opacity: 1; }

/* ribbon */
.ribbon { display: flex; height: 93px; background: #fdfdfd; border-bottom: 1px solid #ababab; flex: none; padding: 3px 0; }
.group { display: flex; flex-direction: column; border-right: 1px solid #d4d4d4; }
.cells { display: grid; justify-content: start; column-gap: 4px; height: 70px; }
.name { text-align: center; color: #666; font-size: 11px; line-height: 16px; margin-top: 2px; }
.g-tools { width: 182px; }
.g-tools .cells { grid-template-columns: 42px 44px auto; column-gap: 0; padding-left: 4px; }
.g-tools .col { padding-left: 4px; }
.g-view { width: 309px; }
.g-view .cells { grid-template-columns: 44px 71px 44px auto; padding-left: 4px; }
.g-edit { width: 107px; }
.g-edit .cells { grid-template-columns: 44px 48px; padding-left: 3px; }
.g-comment { width: 135px; }
.g-comment .cells { grid-template-columns: 62px 56px; padding-left: 8px; }
.g-pages { width: 129px; }
.g-pages .cells { grid-template-columns: 46px auto; column-gap: 8px; padding-left: 5px; }
.g-convert { width: 93px; }
.g-convert .cells { grid-template-columns: 38px 38px; padding-left: 6px; }
.g-protect { width: 51px; }
.g-protect .cells { grid-template-columns: 42px; padding-left: 4px; }
.big { flex-direction: column; justify-content: flex-start; padding-top: 3px; white-space: nowrap; }
.big > svg:first-child { margin-bottom: 3px; }
.big span { display: flex; align-items: center; gap: 2px; }
.big.on { background: #d8bbe8; }
.under { margin-top: 3px; }
.col { display: flex; flex-direction: column; padding-top: 1px; }
.small { height: 22px; gap: 4px; justify-content: flex-start; white-space: nowrap; }
.small:disabled { color: #b5b5b5; }
.arr { margin-left: 3px; }
.zoomcol { padding-left: 2px; }
.zoomrow { display: flex; align-items: center; gap: 6px; height: 22px; }
.combo { position: relative; display: flex; align-items: center; background: #fff; border: 1px solid #ababab; }
.combo select { appearance: none; width: 100%; padding-left: 4px; color: #111; outline: 0; }
.combo svg { position: absolute; right: 4px; }
.zoomrow .combo { width: 78px; height: 22px; }
.ocr { font: bold 8px/8px "Liberation Sans", sans-serif; fill: #4a7fb5; }
.pdf { font: bold 5px/5px "Liberation Sans", sans-serif; fill: #fff; }
.collapse { margin: auto 9px 4px auto; }

/* document tabs */
.doctabs { display: flex; align-items: flex-end; height: 32px; border-bottom: 1px solid #ababab; padding-left: 37px; flex: none; }
.dtab { position: relative; height: 24px; width: 151px; justify-content: flex-start; padding: 4px 0 0 17px; }
.dtab > svg:first-child { position: absolute; left: 0; top: 0; }
.dtab span { position: relative; }
.current { width: 193px; z-index: 1; }
.dtab .x { position: relative; margin-left: auto; margin-right: 12px; }
.tablist { margin: 0 6px 12px auto; }

/* work area */
.work { display: flex; flex: 1; min-height: 0; }
.rail { width: 33px; border-right: 1px solid #ababab; padding-top: 41px; flex: none; }
.rail button { width: 33px; height: 45px; padding-left: 3px; }
.rail .form { height: 56px; }
.rail .sign { height: 40px; }
.rail .active { background: #fff; border: 1px solid #ababab; border-right: 0; padding-left: 2px; }
.panel { width: 253px; flex: none; display: flex; flex-direction: column; }
.panelhead { display: flex; align-items: center; height: 25px; border-bottom: 1px solid #ababab; margin-right: 3px; padding: 1px 5px 0 4px; color: #444; }
.panelhead span { flex: 1; }
.panelhead svg + svg { margin-left: 9px; }
.panelbody { flex: 1; background: #fff; margin-right: 3px; padding-top: 5px; }
.bmtools { display: flex; gap: 19px; padding-left: 10px; }
.tree, .tree ul { list-style: none; margin: 0; padding: 0; }
.tree { padding: 6px 0 0 7px; color: #111; line-height: 18px; }
.tree > li > svg { float: left; margin-right: 4px; }
.tree li li svg { float: left; margin-right: 8px; }
.tree li li { padding-left: 23px; }
.splitter { width: 6px; background: #ababab; flex: none; display: flex; align-items: center; justify-content: center; }
.splitter::before { content: ""; width: 4px; height: 44px; background: radial-gradient(circle, #666 1px, transparent 1px) 0 0 / 2px 3px; margin-top: -75px; }
.viewer { position: relative; flex: 1; min-width: 0; background: #ababab; padding-top: 15px; overflow: hidden; }
.paper { margin: 0 auto; background: #fff; border: 1px solid #555; }
.support { position: absolute; right: 9px; bottom: 24px; border-radius: 50%; box-shadow: 0 3px 6px rgba(0, 0, 0, .25); }

/* floor plan */
.plot path { fill: none; stroke: #ff2bff; }
.eave { fill: none; stroke: #9db4ff; stroke-width: 1.5px; stroke-dasharray: 9 4; }
.frame path { fill: none; stroke: #bbb; }
.glass path { stroke: #3d3dff; stroke-width: 1.5px; fill: none; }
.rail-line { stroke: #ffa3a3; stroke-width: 1.5px; }
.walls path { fill: url(#hatch) #fff; stroke: #111; stroke-width: 1.3px; }
.doors path { fill: none; stroke: #e07b1c; }
.dims > path { fill: none; stroke: #0b9a34; marker: url(#tick); }
.dimtext { font: 9px "Liberation Sans", sans-serif; fill: #0b9a34; text-anchor: middle; }
.cuts path { fill: none; stroke: #111; stroke-width: 1.3px; }
.cuts text { font: bold 25px "Liberation Sans", sans-serif; fill: #000; }
.plantitle { font: bold 24px "Liberation Serif", serif; }
.notes { font: 16px "Liberation Sans", sans-serif; }
.strong { font-weight: bold; }

/* status bar */
.status { display: flex; align-items: center; justify-content: space-between; height: 31px; border-bottom: 1px solid #bdbdbd; flex: none; }
.pager { display: flex; align-items: center; margin-left: 40%; padding-left: 6px; gap: 10px; }
.pager .prev { margin-left: 4px; }
.pager .combo { width: 115px; height: 20px; }
.pager .last { margin: 0 2px 0 5px; }
.views { display: flex; align-items: center; padding-right: 18px; gap: 6px; color: #333; }
.mode { width: 20px; height: 18px; }
.mode.on { width: 23px; background: #d8bbe8; }
.pct { margin-left: 18px; gap: 28px; }
.pct + button { margin-left: -2px; }
.slider { appearance: none; width: 91px; height: 16px; background: linear-gradient(#333, #333) center / 100% 1px no-repeat; }
.slider::-webkit-slider-thumb { appearance: none; width: 4px; height: 8px; background: #222; }

/* taskbar */
.taskbar { display: grid; grid-template-columns: 1fr auto 1fr; align-items: center; height: 47px; flex: none; font-family: "Noto Sans", sans-serif; }
.apps { grid-column: 2; display: flex; align-items: center; padding-left: 12px; }
.search { display: flex; align-items: center; width: 219px; height: 31px; margin: 0 3px 0 13px; border-radius: 16px; background: #fbfbfb; border: 1px solid #dcdcdc; padding: 0 4px 0 10px; gap: 10px; }
.search input { flex: 1; min-width: 0; font-size: 13px; }
.search input::placeholder { color: #555; opacity: 1; }
.app { position: relative; width: 38px; height: 39px; margin: 0 3px; border-radius: 4px; }
.running::after, .front::after { content: ""; position: absolute; bottom: 0; width: 6px; height: 3px; border-radius: 2px; background: #888; }
.front { background: #fafafa; }
.front::after { width: 16px; background: #0a78d4; }
.tray { display: flex; align-items: center; justify-content: flex-end; padding-right: 19px; gap: 15px; }
.trayicons { display: flex; align-items: center; gap: 7px; }
.clock { text-align: right; }
```
